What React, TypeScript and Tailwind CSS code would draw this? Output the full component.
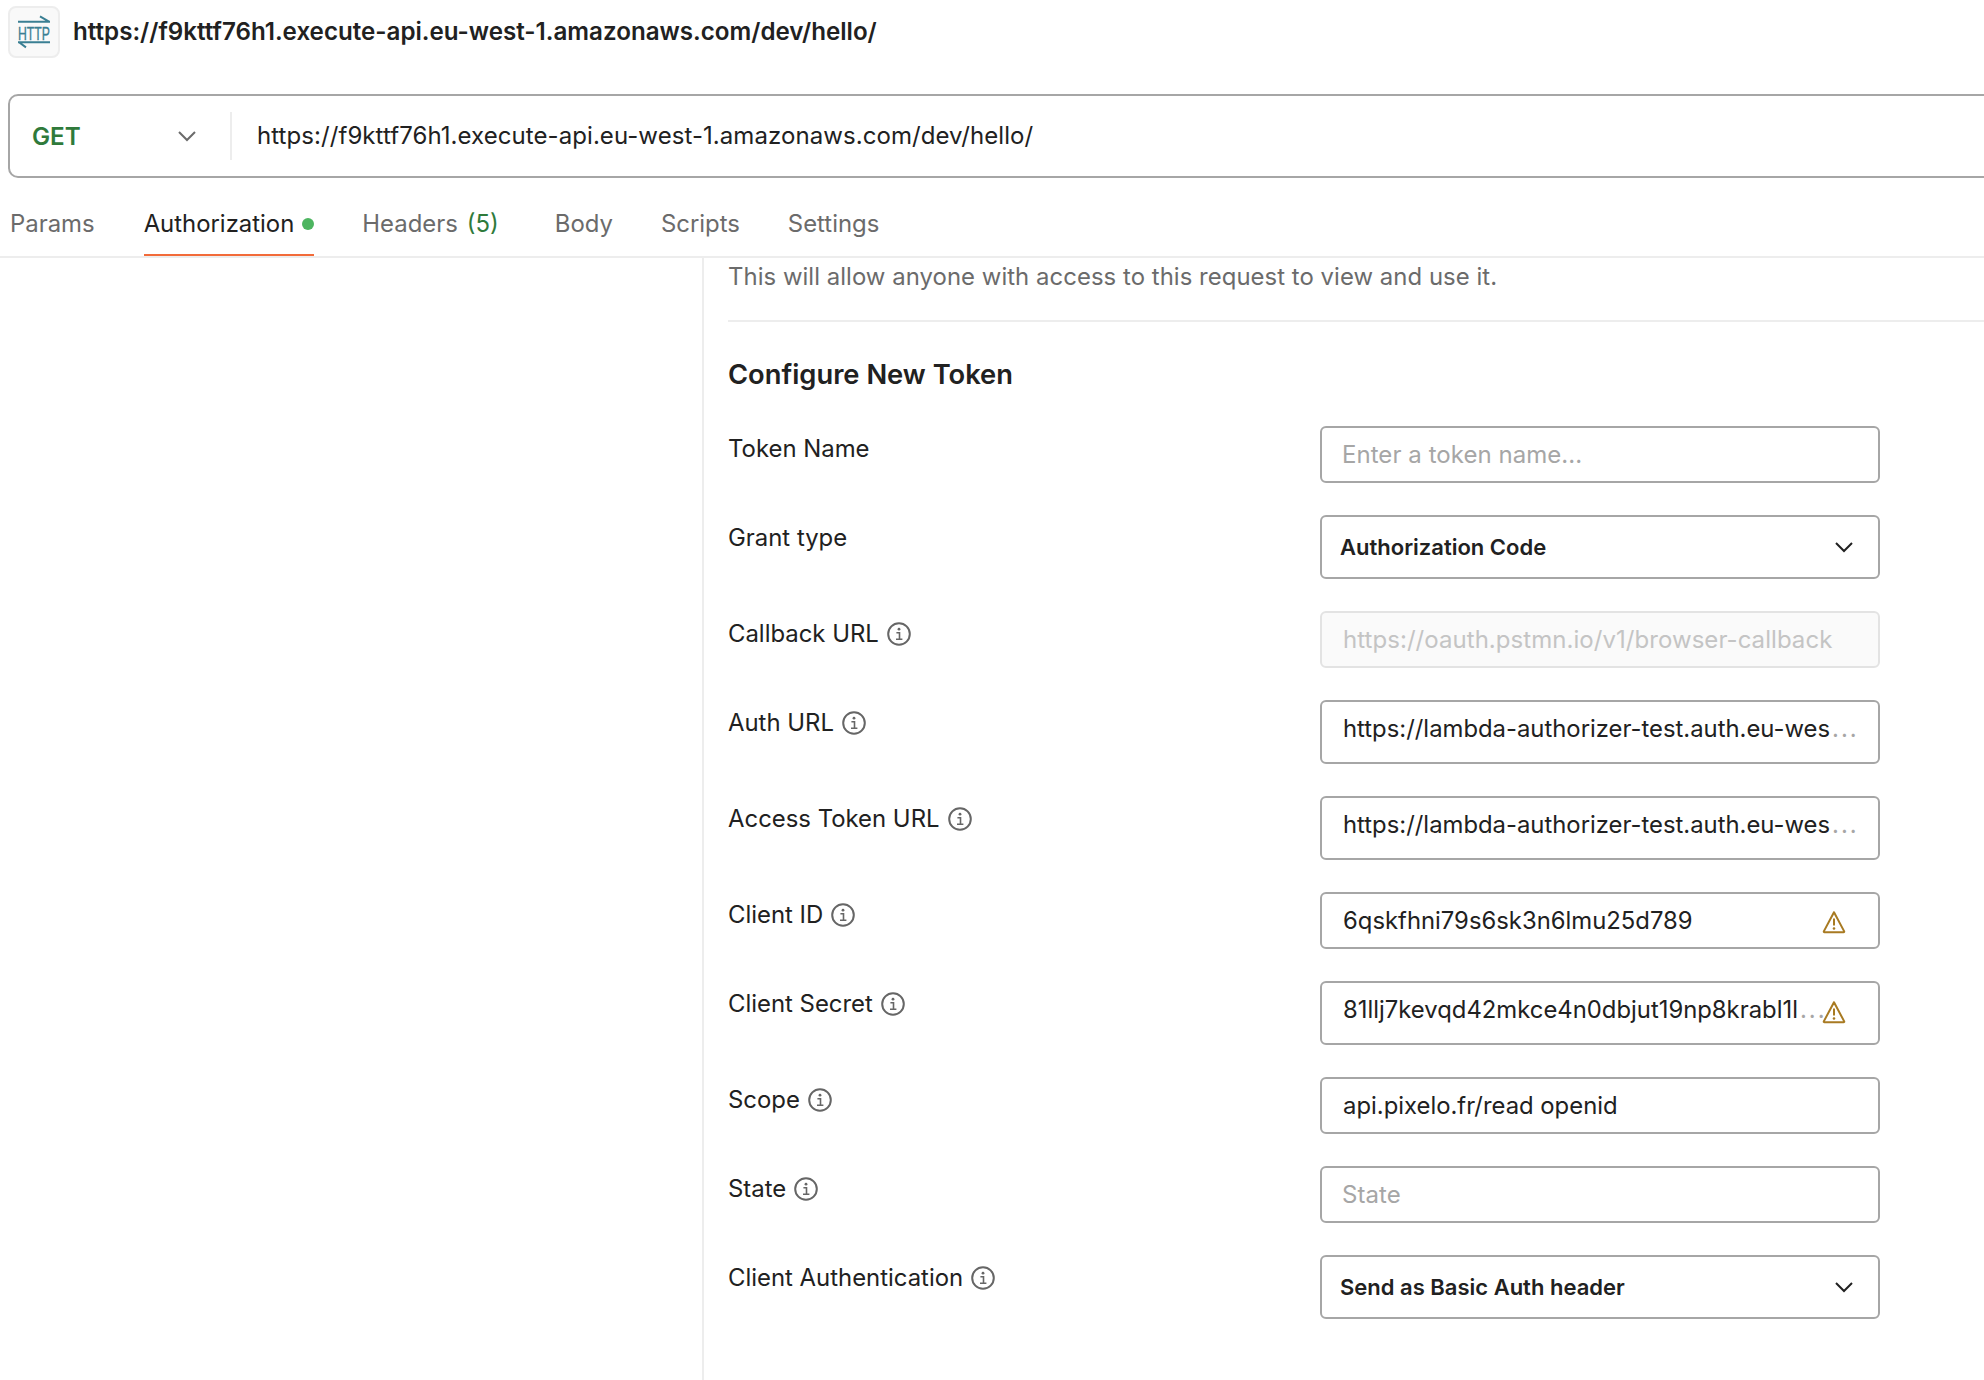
const inter = "font-['Inter',sans-serif]";

function Info() {
  return (
    <svg width="26" height="26" viewBox="0 0 26 26" fill="none" className="shrink-0 ml-[7px] text-[#666666]">
      <circle cx="13" cy="13" r="10.8" stroke="currentColor" strokeWidth="2" />
      <circle cx="13" cy="8.2" r="1.4" fill="currentColor" />
      <path d="M10.4 11.8h3.1v6.2M10 18.2h6.4" stroke="currentColor" strokeWidth="1.6" />
    </svg>
  );
}

function Chevron({ color = "#212121" }: { color?: string }) {
  return (
    <svg width="20" height="12" viewBox="0 0 20 12" fill="none" className="shrink-0">
      <path d="M2 2l8 8 8-8" stroke={color} strokeWidth="2" />
    </svg>
  );
}

function Warn({ shift }: { shift?: boolean }) {
  return (
    <svg width="24" height="24" viewBox="0 0 24 24" fill="none" className={`shrink-0 ${shift ? "mt-[3px]" : ""}`}>
      <path d="M12 2.2L1.8 21.4c-.2.5.1.9.6.9h19.2c.5 0 .8-.4.6-.9L12 2.2z" stroke="#a87a22" strokeWidth="2" strokeLinejoin="round" />
      <path d="M12 8.5v7" stroke="#a87a22" strokeWidth="2" />
      <circle cx="12" cy="18.5" r="1.3" fill="#a87a22" />
    </svg>
  );
}

function Label({ text, info = true }: { text: string; info?: boolean }) {
  return (
    <div className="w-[592px] shrink-0 flex items-center h-[46px] text-[#212121] text-[23.9px]">
      <span>{text}</span>
      {info && <Info />}
    </div>
  );
}

function Box({ tall, disabled, children }: { tall?: boolean; disabled?: boolean; children: React.ReactNode }) {
  return (
    <div
      className={`w-[560px] flex items-center rounded-[6px] border-[2.5px] ${tall ? "h-[64px]" : "h-[57px]"} ${disabled ? "border-[#e3e3e3] bg-[#fafafa]" : "border-[#a6a6a6] bg-white"}`}
    >
      {children}
    </div>
  );
}

function Row({ label, info, tall, disabled, children }: { label: string; info?: boolean; tall?: boolean; disabled?: boolean; children: React.ReactNode }) {
  return (
    <div className="flex items-start">
      <Label text={label} info={info} />
      <Box tall={tall} disabled={disabled}>{children}</Box>
    </div>
  );
}

function Value({ text, dots, warn, raised }: { text: string; dots?: boolean; warn?: boolean; raised?: boolean }) {
  return (
    <div className="flex items-center w-full pl-[21px] pr-[20px] text-[23.85px] text-[#212121]">
      <span className={`flex min-w-0 whitespace-nowrap ${raised ? "pb-[7px]" : ""}`}>
        <span className="shrink-0">{text}</span>
        {dots && <span className="shrink-0 ml-[2px] text-[#a6a6a6] tracking-[2px]">...</span>}
      </span>
      {warn && <span className={`ml-auto mr-[12px] flex shrink-0 ${raised ? "pb-[2px]" : ""}`}><Warn shift={!raised} /></span>}
    </div>
  );
}

function Placeholder({ text, color = "text-[#a6a6a6]", inset = "pl-[20px]" }: { text: string; color?: string; inset?: string }) {
  return (
    <div className={`${inset} ${color} text-[24px] tracking-[0.05px] whitespace-nowrap`}>
      {text}
    </div>
  );
}

function Select({ text }: { text: string }) {
  return (
    <div className="flex items-center justify-between w-full pl-[18px] pr-[24px] text-[22px] font-semibold text-[#212121]">
      <span>{text}</span>
      <Chevron />
    </div>
  );
}

function Tab({ children, active }: { children: React.ReactNode; active?: boolean }) {
  return (
    <div className={`relative h-[64px] flex items-center text-[23.9px] ${active ? "text-[#212121]" : "text-[#6b6b6b]"}`}>
      {children}
      {active && <div className="absolute left-0 right-0 bottom-0 h-[2.5px] bg-[#f26b3a]" />}
    </div>
  );
}

export default function App() {
  return (
    <div className={`w-[1984px] h-[1380px] bg-white overflow-hidden flex flex-col ${inter}`}>
      <div className="h-[94px] shrink-0 pt-[6px] pl-[8px] flex items-start">
        <div className="w-[52px] h-[52px] rounded-[8px] border-2 border-[#ededed] bg-[#f9f9f9] flex items-center justify-center">
          <svg width="40" height="40" viewBox="0 0 40 40" fill="none" className="overflow-visible">
            <path d="M4 9.7h32M26 4.4l9 5.3" stroke="#3a7f93" strokeWidth="2" />
            <text x="20" y="27.5" textAnchor="middle" fontSize="18.5" fill="#3a7f93" stroke="#3a7f93" strokeWidth="0.35" fontFamily="Liberation Sans, sans-serif" textLength="32" lengthAdjust="spacingAndGlyphs">HTTP</text>
            <path d="M36 30.3H4M12 35.4l-7-5.1" stroke="#3a7f93" strokeWidth="2" />
          </svg>
        </div>
        <div className="ml-[13px] h-[52px] flex items-center text-[24.15px] font-semibold text-[#212121] whitespace-nowrap">
          https://f9kttf76h1.execute-api.eu-west-1.amazonaws.com/dev/hello/
        </div>
      </div>

      <div className="ml-[8px] w-[2100px] h-[84px] shrink-0 rounded-[10px] border-[2.5px] border-[#a6a6a6] flex items-center">
        <div className="w-[220px] pl-[22px] pr-[33px] flex items-center justify-between">
          <span className="pt-[2px] text-[24.2px] font-semibold text-[#2f7a3b]">GET</span>
          <Chevron color="#6b6b6b" />
        </div>
        <div className="w-[2px] h-[48px] bg-[#ededed]" />
        <div className="ml-[25px] text-[24px] text-[#212121] tracking-[0.07px] whitespace-nowrap">
          https://f9kttf76h1.execute-api.eu-west-1.amazonaws.com/dev/hello/
        </div>
      </div>

      <div className="h-[80px] shrink-0 pt-[14px] border-b-[2px] border-[#ededed]">
        <div className="flex pl-[10px] h-[64px]">
          <Tab>Params</Tab>
          <div className="ml-[49px]">
            <Tab active>
              Authorization
              <span className="ml-[8px] w-[12px] h-[12px] rounded-full bg-[#4db560]" />
            </Tab>
          </div>
          <div className="ml-[48px]">
            <Tab>Headers <span className="ml-[9px] text-[#2f7a3b]">(5)</span></Tab>
          </div>
          <div className="ml-[56px]"><Tab>Body</Tab></div>
          <div className="ml-[48px]"><Tab>Scripts</Tab></div>
          <div className="ml-[48px]"><Tab>Settings</Tab></div>
        </div>
      </div>

      <div className="flex-1 flex min-h-0">
        <div className="w-[702px] shrink-0 border-r-[2px] border-[#ededed] box-content" />
        <div className="flex-1 pl-[24px]">
          <div className="h-[64px] pt-[1px] border-b-[2px] border-[#ededed] text-[23.9px] text-[#6b6b6b] tracking-[0.05px]">
            This will allow anyone with access to this request to view and use it.
          </div>
          <div className="pt-[33px] text-[27.3px] font-semibold text-[#212121] leading-[40px]">Configure New Token</div>
          <div className="mt-[31px] flex flex-col gap-[32px]">
            <Row label="Token Name" info={false}><Placeholder text="Enter a token name..." /></Row>
            <Row label="Grant type" info={false} tall><Select text="Authorization Code" /></Row>
            <Row label="Callback URL" disabled><Placeholder text="https://oauth.pstmn.io/v1/browser-callback" color="text-[#c4c4c4]" inset="pl-[21px]" /></Row>
            <Row label="Auth URL" tall><Value text="https://lambda-authorizer-test.auth.eu-wes" dots raised /></Row>
            <Row label="Access Token URL" tall><Value text="https://lambda-authorizer-test.auth.eu-wes" dots raised /></Row>
            <Row label="Client ID"><Value text="6qskfhni79s6sk3n6lmu25d789" warn /></Row>
            <Row label="Client Secret" tall><Value text="81llj7kevqd42mkce4n0dbjut19np8krabl1l" dots warn raised /></Row>
            <Row label="Scope"><Value text="api.pixelo.fr/read openid" /></Row>
            <Row label="State"><Placeholder text="State" /></Row>
            <Row label="Client Authentication" tall><Select text="Send as Basic Auth header" /></Row>
          </div>
        </div>
      </div>
    </div>
  );
}
